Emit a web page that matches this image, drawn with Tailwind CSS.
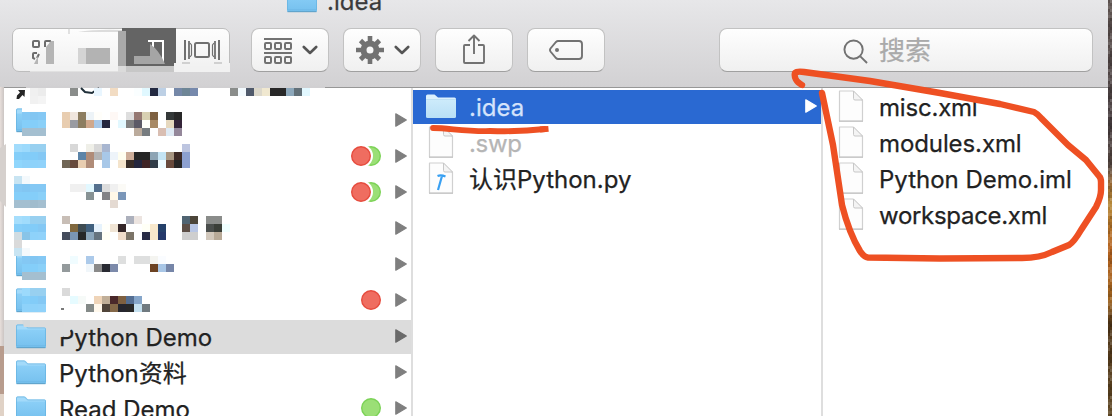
<!DOCTYPE html>
<html lang="zh">
<head>
<meta charset="utf-8">
<title>.idea</title>
<script src="https://cdn.jsdelivr.net/npm/@tailwindcss/browser@4"></script>
</head>
<body class="relative w-[1112px] h-[416px] overflow-hidden bg-[#3a302e] font-['Inter','Noto_Sans_CJK_SC',sans-serif] text-[24px] text-[#222] [-webkit-text-stroke:0.25px]">
<svg class="absolute h-0 w-0">
  <defs>
    <linearGradient id="fg" x1="0" y1="0" x2="0" y2="1"><stop offset="0" stop-color="#8bcff7"/><stop offset="1" stop-color="#75c0ee"/></linearGradient>
    <linearGradient id="fs" x1="0" y1="0" x2="0" y2="1"><stop offset="0" stop-color="#cdebfb"/><stop offset="1" stop-color="#b9e0f6"/></linearGradient>
    <linearGradient id="bt" x1="0" y1="0" x2="0" y2="1"><stop offset="0" stop-color="#fdfdfd"/><stop offset="1" stop-color="#f0f0f0"/></linearGradient>
    <linearGradient id="photo" x1="0" y1="0" x2="0" y2="1"><stop offset="0" stop-color="#5b504d"/><stop offset=".3" stop-color="#453b3d"/><stop offset=".4" stop-color="#54463f"/><stop offset=".44" stop-color="#9a6a35"/><stop offset=".49" stop-color="#b48534"/><stop offset=".6" stop-color="#b5621f"/><stop offset=".72" stop-color="#a0641f"/><stop offset=".78" stop-color="#4e3417"/><stop offset="1" stop-color="#5d4522"/></linearGradient>
  </defs>
  <symbol id="folder" viewBox="0 0 30 25"><path d="M0 23V2Q0 .5 1.500 .5H8.500Q9.500 .5 10 1.200L12 3.500H28.500Q30 3.500 30 5V23Z" fill="#a3dafa"/><path d="M0 5.500H30V22.500Q30 24 28.500 24H1.500Q0 24 0 22.500Z" fill="url(#fg)"/><path d="M.5 22V2Q.5 .9 1.500 .9H8.500L11.500 3.900H28.500Q29.500 3.900 29.500 5V22" fill="none" stroke="#64b1df" stroke-width=".7"/><path d="M.5 23.700H29.500" stroke="#5d9fc6" stroke-width="1"/><path d="M1 21.800H29" stroke="#65afdf" stroke-width=".5"/></symbol>
  <symbol id="folderSel" viewBox="0 0 30 25"><path d="M0 23V2Q0 .5 1.500 .5H8.500L12 3.500H28.500Q30 3.500 30 5V23Z" fill="#dcf1fd"/><path d="M0 5.500H30V22.500Q30 24 28.500 24H1.500Q0 24 0 22.500Z" fill="url(#fs)"/><path d="M0 5.500H30" stroke="#a7d3ec" stroke-width=".5"/></symbol>
  <symbol id="file" viewBox="0 0 26 32"><path d="M1.500 1H15L24.500 10.500V31H1.500Z" fill="#fdfdfd" stroke="#d0d0d0" stroke-width="1.200" stroke-linejoin="round"/><path d="M1 31.200H25" stroke="#bdbdbd" stroke-width="1"/><path d="M15.500 1V8.500Q15.500 10 17 10H24.500Z" fill="#f4f4f4" stroke="#c8c8c8" stroke-width="1"/></symbol>
  <symbol id="tri" viewBox="0 0 12 14"><path d="M.8 .8L11.300 7L.8 13.200Z" stroke="currentColor" stroke-width="1.200" stroke-linejoin="round" fill="currentColor"/></symbol>
  <symbol id="chev" viewBox="0 0 16 10"><path d="M1.800 2L8 8L14.200 2" fill="none" stroke="#555" stroke-width="2.600" stroke-linecap="round" stroke-linejoin="round"/></symbol>
</svg>

<div class="flex h-full">
  <!-- desktop strip, left -->
  <div class="flex w-1 shrink-0 flex-col">
    <div class="h-[87px] bg-gradient-to-b from-[#e7e7e9] to-[#d2d1d3]"></div>
    <div class="h-[259px] bg-gradient-to-r from-[#e8dfdb] to-[#cbc5c3]"></div>
    <div class="h-12 bg-[#b89c8d]"></div>
    <div class="flex-1 bg-[#e0d2c6]"></div>
  </div>

  <main class="flex w-[1104px] shrink-0 flex-col">
    <header class="flex h-[88px] shrink-0 flex-col bg-gradient-to-b from-[#e7e7e9] to-[#d2d1d3] border-b border-[#979797]">
      <div class="flex h-7 shrink-0 overflow-hidden pl-[283px]">
        <svg class="-mt-[12px] h-[25px] w-[30px] shrink-0"><use href="#folder"/></svg>
        <span class="-mt-[13px] ml-[10px] h-[30px] leading-[30px] text-[#3b3b3b]">.idea</span>
      </div>
      <div class="flex h-11 pl-2">
        <svg class="h-11 w-[218px] shrink-0" viewBox="12 28 218 44">
          <rect x="12.500" y="28.500" width="217" height="43" rx="6.500" fill="url(#bt)" stroke="#bdbdbd"/>
          <path d="M69 28V34" stroke="#c5c5c5"/>
          <path d="M78 32Q95 29 122 30V32Z" fill="#dcdcdc"/>
          <g fill="none" stroke="#6c6c6c" stroke-width="2"><rect x="33" y="41" width="6" height="6" rx="1"/><path d="M45 47V42Q45 41 46 41H50L52 44"/><path d="M37 53H34Q33 53 33 54V58L35 59M39 54L37 58"/></g>
          <path d="M46 47L51 41H54V64H46ZM34 64L38 56V64Z" fill="#b5b5b5"/>
          <rect x="78" y="48" width="8" height="16" fill="#d4d4d4"/><rect x="86" y="48" width="24" height="16" fill="#b3b3b3"/>
          <rect x="122" y="27" width="54" height="45" fill="#646464"/>
          <rect x="118" y="31" width="8" height="41" fill="#a9a9a9"/>
          <path d="M148 41H163V62" fill="none" stroke="#fff" stroke-width="2"/><path d="M153 41V50" stroke="#fff" stroke-width="2"/>
          <path d="M134 56H150V44Q159 50 165 64H134Z" fill="#a5a5a5"/>
          <path d="M174 63H230V72H174Z" fill="#f2f2f2"/>
          <g fill="none" stroke="#707070"><rect x="195" y="43" width="14" height="14" rx="1.500" stroke-width="2"/><path d="M185 40V60M219 40V60" stroke-width="2"/><path d="M189 41V59M215 41V59" stroke-width="1.800"/><path d="M190 43L191.500 45V55L190 57M214 43L212.500 45V55L214 57" stroke-width="1.200"/></g>
          <path d="M182 62h8v2h-8zM214 62h8v2h-8z" fill="#d0d0d0"/>
        </svg>
        <div class="ml-[21px] flex h-11 w-[78px] items-center gap-[10px] rounded-lg border border-[#c2c2c2] border-b-[#a0a0a0] bg-gradient-to-b from-[#fefefe] to-[#f0f0f0] pl-3">
          <svg class="mt-[2px] h-[28px] w-[28px]" viewBox="0 0 28 28" fill="none" stroke="#727272" stroke-width="2"><path d="M0 2H28M0 16H28"/><rect x="1" y="6" width="6" height="6" rx="1"/><rect x="11" y="6" width="6" height="6" rx="1"/><rect x="21" y="6" width="6" height="6" rx="1"/><rect x="1" y="20" width="6" height="6" rx="1"/><rect x="11" y="20" width="6" height="6" rx="1"/><rect x="21" y="20" width="6" height="6" rx="1"/></svg>
          <svg class="h-[10px] w-4"><use href="#chev"/></svg>
        </div>
        <div class="ml-[14px] flex h-11 w-[78px] items-center gap-[10px] rounded-lg border border-[#c2c2c2] border-b-[#a0a0a0] bg-gradient-to-b from-[#fefefe] to-[#f0f0f0] pl-3">
          <svg class="h-[28px] w-[28px]" viewBox="-14 -14 28 28"><g stroke="#727272" stroke-width="4.600"><path d="M0-14V14M-14 0H14M-9.500-9.500L9.500 9.500M-9.500 9.500L9.500-9.500"/></g><circle r="6.500" fill="#f7f7f7" stroke="#727272" stroke-width="6"/></svg>
          <svg class="h-[10px] w-4"><use href="#chev"/></svg>
        </div>
        <div class="ml-[14px] flex h-11 w-[78px] items-center justify-center rounded-lg border border-[#c2c2c2] border-b-[#a0a0a0] bg-gradient-to-b from-[#fefefe] to-[#f0f0f0]">
          <svg class="mb-[3px] h-[30px] w-6" viewBox="0 0 24 30" fill="none" stroke="#727272" stroke-width="1.900" stroke-linejoin="round"><path d="M8 11H3Q2 11 2 12V28Q2 29 3 29H21Q22 29 22 28V12Q22 11 21 11H16M12 20V1.500M6.500 7L12 1.500L17.500 7"/></svg>
        </div>
        <div class="ml-[14px] flex h-11 w-[78px] items-center justify-center rounded-lg border border-[#c2c2c2] border-b-[#a0a0a0] bg-gradient-to-b from-[#fefefe] to-[#f0f0f0]">
          <svg class="h-[20px] w-[34px]" viewBox="0 0 34 20"><path d="M9 1H30Q33 1 33 4V16Q33 19 30 19H9Q8 19 7 18L1.500 11.500Q.5 10 1.500 8.500L7 2Q8 1 9 1Z" fill="none" stroke="#727272" stroke-width="1.900"/><circle cx="8" cy="10" r="2" fill="#727272"/></svg>
        </div>
        <div class="ml-[114px] flex h-11 w-[374px] items-center rounded-lg border border-[#c2c2c2] border-b-[#a0a0a0] bg-gradient-to-b from-[#fefefe] to-[#f0f0f0] pl-[123px] text-[26px] text-[#aaa]">
          <svg class="mt-[2px] h-[25px] w-[25px]" viewBox="0 0 26 26" fill="none" stroke="#727272" stroke-width="2"><circle cx="11" cy="11" r="9.500"/><path d="M18 18L25 25"/></svg>
          <span class="ml-[11px] mt-[2px] leading-9">搜索</span>
        </div>
      </div>
    </header>

    <div class="flex min-h-0 flex-1 bg-white">
      <section class="w-[407px] shrink-0 overflow-hidden"><div id="left" class="-mt-[21px]"></div></section>
      <section class="w-[410px] shrink-0 border-l-2 border-[#dedede] pt-[2px]">
        <div class="flex h-[34px] items-center bg-[#2a69d2] pl-[13px] pr-1 text-[#d5e3fb]">
          <svg class="-mt-[2px] h-[25px] w-[30px]"><use href="#folderSel"/></svg><span class="ml-[13px] mt-[2px] flex-1 leading-[34px]">.idea</span>
          <svg class="-mt-[2px] h-[14px] w-3 text-white"><use href="#tri"/></svg>
        </div>
        <div class="mt-[1px] flex h-9 items-center pl-[15px] text-[#b5b5b5]"><svg class="-mt-[3px] h-8 w-[26px]"><use href="#file"/></svg><span class="ml-[15px] mt-[2px] leading-[34px] tracking-[-0.3px]">.swp</span></div>
        <div class="flex h-9 items-center pl-[15px]"><svg class="-mt-[3px] h-8 w-[26px]" viewBox="0 0 26 32"><use href="#file" width="26" height="32"/><path d="M9.500 14Q13 12.500 17.500 14.500M14 14L10 28" fill="none" stroke="#39a0f2" stroke-width="2.200"/></svg><span class="ml-[15px] mt-[2px] whitespace-nowrap leading-[34px]">认识Python.py</span></div>
      </section>
      <section class="flex-1 border-l-2 border-[#dedede] pt-[1px]">
        <div class="flex h-9 items-center pl-[15px]"><svg class="-mt-[3px] h-8 w-[26px]"><use href="#file"/></svg><span class="ml-[15px] mt-[2px] leading-[34px] tracking-[-0.2px]">misc.xml</span></div>
        <div class="flex h-9 items-center pl-[15px]"><svg class="-mt-[3px] h-8 w-[26px]"><use href="#file"/></svg><span class="ml-[15px] mt-[2px] leading-[34px] tracking-[-0.1px]">modules.xml</span></div>
        <div class="flex h-9 items-center pl-[15px]"><svg class="-mt-[3px] h-8 w-[26px]"><use href="#file"/></svg><span class="ml-[15px] mt-[2px] whitespace-nowrap leading-[34px]">Python Demo.iml</span></div>
        <div class="flex h-9 items-center pl-[15px]"><svg class="-mt-[3px] h-8 w-[26px]"><use href="#file"/></svg><span class="ml-[15px] mt-[2px] leading-[34px] tracking-[-0.3px]">workspace.xml</span></div>
      </section>
    </div>
  </main>

  <svg class="h-full w-1 shrink-0" viewBox="0 0 4 416"><rect width="4" height="416" fill="url(#photo)"/><g id="grain"></g></svg>
</div>

<!-- pixelated blocks and hand-drawn marks over the window -->
<svg class="absolute inset-0 h-[416px] w-[1112px]" viewBox="0 0 1112 416">
  <rect x="26" y="86" width="299" height="2" fill="#d1d0d2"/>
  <rect x="30" y="66" width="200" height="6" fill="#f1f1f1" opacity=".7"/>
  <path d="M0 148L6 144V207L0 201Z" fill="#d5d0cd"/>
  <path d="M18 90H25L24.500 97L22.500 95L19 99H16.500L17 95.500L20 92.500Z" fill="#252525"/>
  <path d="M81 88L85 92L92 93L99 88" fill="none" stroke="#20303a" stroke-width="2"/>
  <g id="mosaic" shape-rendering="crispEdges"></g>
  <path d="M59 325H76V328L70.500 330Q69 335 62.500 337H59Z" fill="#dcdcdc"/>
  <path d="M22 320H30V327H24Z" fill="#d5d9db"/>
  <path d="M61 309h3" stroke="#222" stroke-width="1.200"/>
  <g fill="none" stroke="#ee5023" stroke-width="6.400" stroke-linecap="round" stroke-linejoin="round">
    <path d="M802 85C796 82 794 77 795 73Q797 71 804 72L870 81L940 93L1000 104L1034 112Q1038 114 1042 119L1068 145L1086 160L1099 176Q1101 178 1101 182V190Q1101 197 1096 207L1081 230Q1074 242 1069 245L1052 252Q1040 258 1022 258L940 258.500L868 257.500Q864 257 860 251Q849 233 842 205L833 145L822 93"/>
    <path stroke-width="5.800" d="M433 128C450 128 462 131.500 490 131Q520 132 545 129"/>
    <path stroke-width="5.800" stroke-linecap="butt" d="M540 129.500L548.500 128.800"/>
  </g>
</svg>

<script>
const tags = {
  r: '<svg class="h-5 w-[30px]" viewBox="0 0 30 20"><circle cx="20" cy="10" r="9.300" fill="#ef6d60" stroke="#e64c3e" stroke-width="1.400"/></svg>',
  g: '<svg class="h-5 w-[30px]" viewBox="0 0 30 20"><circle cx="20" cy="10" r="9.300" fill="#9bdf76" stroke="#7cd257" stroke-width="1.400"/></svg>',
  rg: '<svg class="h-5 w-[30px]" viewBox="0 0 30 20"><circle cx="20" cy="10" r="9.300" fill="#9bdf76" stroke="#7cd257" stroke-width="1.400"/><circle cx="10.500" cy="10" r="11.500" fill="#fff"/><circle cx="10" cy="10" r="9.300" fill="#ef6d60" stroke="#e64c3e" stroke-width="1.400"/></svg>'
};
// name, tag, arrow, folder
const rows = [['', '', 0, 0], ['', '', 1, 1], ['', 'rg', 1, 0], ['', 'rg', 1, 0], ['', '', 1, 0], ['', '', 1, 1], ['', 'r', 1, 1],
  ['Python Demo', '', 1, 1], ['Python资料', '', 1, 1], ['Read Demo', 'g', 1, 1]];
document.getElementById('left').innerHTML = rows.map(([n, t, a, f], i) =>
  `<div class="flex h-9 items-center py-px"><div class="flex h-[34px] w-full items-center pl-3 pr-1 ${i === 7 ? 'bg-[#dcdcdc] text-[#696969]' : 'text-[#7f7f7f]'}">
  <svg class="-mt-[2px] h-[25px] w-[30px] shrink-0">${f ? '<use href="#folder"/>' : ''}</svg>
  <span class="ml-[13px] mt-[2px] flex-1 whitespace-nowrap leading-[34px] text-[#222]">${n}</span>
  ${t ? `<span class="mr-[14px] -mt-[2px] flex">${tags[t]}</span>` : ''}
  ${a ? '<svg class="-mt-[3px] h-[14px] w-3 shrink-0"><use href="#tri"/></svg>' : ''}</div></div>`).join('');

// each line: y, then column:colour pairs on an 8px grid that starts at x=14
const cells = `88 2:f0f0f0 3:ececec 7:8a8d8b 10:e9f6ff 12:f2dcc3 15:fafeff 16:e0f8ff 17:232941 18:bdd0e5 20:7588a8 21:6e8696 22:7689ac 27:8a8d8b 28:f3fafe 29:505a6b 30:dcd8cb 31:f0e8d0 32:282828 33:282828 34:8da8bb 35:627078 36:e2f8ff
96 2:f1f1f1 3:f4f4f4
112 1:84c8f4 2:82c6f2 3:84c8f4 6:e8cdb0 7:f0e6de 8:8c7d60 9:edf3f7 10:fffefa 12:fef8f5 14:dedede 15:957872 16:d8d0b2 17:7d6040 19:343838 20:282828
120 1:84cef9 2:84cef9 3:8ad0f8 6:e8cdb0 7:999ba2 8:8c7d60 9:d0a88c 10:a8c8e8 11:24263e 13:e2f8ff 14:828282 15:5c5a66 16:fffffa 17:a88964 19:e6d8be 20:342438
128 1:a4bfd0 2:a4bfd0 3:a4bfd0 15:bbab9c 16:777c80 18:d9beb2 19:dfeaf4 20:94879a
144 0:a2dcfc 1:9cdafc 2:98d0f0 3:98d0f0 7:d8d8d8 9:efefe8 10:d8d8d8 11:a8b6d0 21:bdc5e0
152 0:84cef9 1:82ccf8 2:82ccf8 3:84c8f4 8:5c84a8 9:b08c78 10:b4b4b4 11:a8c8e8 12:eef4fa 13:fffef0 14:ceae9a 15:262626 16:262626 17:8da4b4 18:c4e4f4 19:a89682 20:3e2a26 21:8ca0d0
160 0:90d6fc 1:8ed2fa 2:8ed2fa 3:90d2fa 6:706656 7:684a3c 8:e8cdb0 9:b08c78 11:a8c8e8 13:f4e4cc 14:382c26 15:24263e 16:402426 17:303c48 18:eefbff 19:684a3c 20:262626 21:8ca0d0
176 0:c8e4f2 1:f4f9fc
184 0:84c8f4 1:82c6f2 2:84c8f4 3:84c8f4 7:f0f0f0 8:f0f0f0 9:e2f8ff 10:54708e 11:dcdcdc 12:f0f0f0 13:fbfaf6
192 0:84cef9 1:84cef9 2:84cef9 3:8ad0f8 9:879294 11:828286 12:fff8e8 13:7a96b8
200 0:a4bfd0 1:a4bfd0 2:a0bccd 3:a4bfd0 12:e4dad2
216 0:a6defc 1:a0dcfc 2:98d0f0 3:98d0f0 6:c8beb6 14:acb0bc 15:ece4e0 21:506472 22:4c463a 24:8a8c8a 25:8a8c8a
224 0:84cef9 1:82ccf8 2:82ccf8 3:84c8f4 7:80683f 8:3e4c52 9:40607e 10:e6f2fc 11:fffffa 12:f0e4d4 13:342628 16:fffff6 17:f8e8cc 18:24406a 21:5c4e46 22:b8c6e4 24:4a4e4c 25:3a3e38 26:f0ffff
232 0:d0dce2 1:88c4e8 2:8ed2fa 3:90d2fa 6:444c5c 7:7a96b4 8:262828 9:8ba6ba 10:66747e 11:fffff4 13:f0dcca 14:7c7468 16:282c44 17:f8e8cc 18:24386a 21:cecece 22:cecece 24:d2c8bc 25:b8aa98
240 0:dadada 1:ffffff 2:ffffff
248 0:c8e4f2 1:f4f9fc 2:ffffff 3:ffffff
256 1:84c8f4 2:82c6f2 3:84c8f4 7:f0fcff 9:accaea 13:dedfdf 15:dedfdf 16:dedfdf 17:f4f4f0 18:fafcff
264 1:84cef9 2:84cef9 3:8ad0f8 6:949a9c 9:f0f6fa 10:8a8a8a 11:282a32 12:7c8aaa 17:6c4222 18:a8c6e6 19:7686a8
272 1:a4bfd0 2:a4bfd0 3:a4bfd0
288 1:9cdafc 2:98d0f0 3:98d0f0 6:dadada
296 1:84cef9 2:82ccf8 3:84c8f4 7:e6fbff 8:f6faf8 10:efd4b8 11:c0ae98 12:4a282a 13:7e6040 14:546e92 15:86a6ca
304 1:8ed2fa 2:8ed2fa 3:90d2fa 9:848a88 10:fff8ec 11:50443a 12:846848 13:26262e 14:282828 15:c4e0f0 16:707a80`;
let out = '<rect x="22" y="104" width="25" height="8" fill="#fff"/><rect x="22" y="280" width="25" height="8" fill="#fff"/>';
for (const line of cells.split('\n')) {
  const [y, ...ps] = line.split(' ');
  for (const p of ps) {
    const [c, col] = p.split(':');
    out += `<rect x="${14 + 8 * c}" y="${y}" width="8" height="8" fill="#${col}"/>`;
  }
}
document.getElementById('mosaic').innerHTML = out;
let grain = '';
for (let y = 0; y < 416; y += 3) for (let x = 0; x < 4; x += 2)
  grain += `<rect x="${x}" y="${y}" width="2" height="3" fill="${(y * 7 + x * 5) % 11 < 5 ? '#000' : '#fff'}" opacity="${((y * 13 + x * 17) % 9) / 40}"/>`;
document.getElementById('grain').innerHTML = grain;
</script>
</body>
</html>
